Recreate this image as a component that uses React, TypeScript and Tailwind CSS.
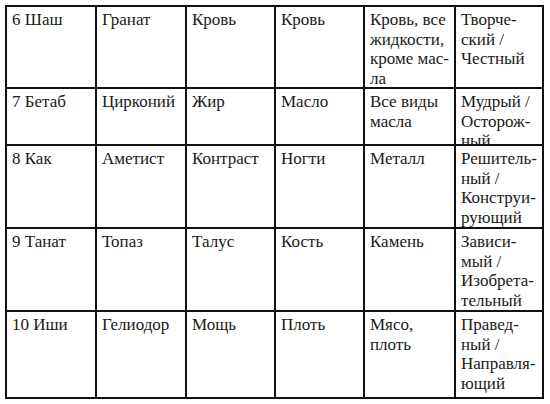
const rows: { h: string; cells: string[][] }[] = [
  {
    h: 'h-[82px]',
    cells: [
      ['6 Шаш'],
      ['Гранат'],
      ['Кровь'],
      ['Кровь'],
      ['Кровь, все', 'жидкости,', 'кроме мас-', 'ла'],
      ['Творче-', 'ский /', 'Честный'],
    ],
  },
  {
    h: 'h-[57px]',
    cells: [
      ['7 Бетаб'],
      ['Цирконий'],
      ['Жир'],
      ['Масло'],
      ['Все виды', 'масла'],
      ['Мудрый /', 'Осторож-', 'ный'],
    ],
  },
  {
    h: 'h-[83px]',
    cells: [
      ['8 Как'],
      ['Аметист'],
      ['Контраст'],
      ['Ногти'],
      ['Металл'],
      ['Решитель-', 'ный /', 'Конструи-', 'рующий'],
    ],
  },
  {
    h: 'h-[83px]',
    cells: [
      ['9 Танат'],
      ['Топаз'],
      ['Талус'],
      ['Кость'],
      ['Камень'],
      ['Зависи-', 'мый /', 'Изобрета-', 'тельный'],
    ],
  },
  {
    h: 'h-[87px]',
    cells: [
      ['10 Иши'],
      ['Гелиодор'],
      ['Мощь'],
      ['Плоть'],
      ['Мясо,', 'плоть'],
      ['Правед-', 'ный /', 'Направля-', 'ющий'],
    ],
  },
]

export default function App() {
  return (
    <div className="w-[550px] h-[404px] bg-white pt-[5px] pl-[5px] text-[#1a1a1a] font-['Liberation_Serif',serif]">
      <div className="grid grid-cols-[90px_90px_89px_89px_91px_88px] w-fit border-t-2 border-l-2 border-[#111]">
        {rows.map((row) =>
          row.cells.map((lines, c) => (
            <div
              key={row.cells[0][0] + c}
              className={`${row.h} border-r-2 border-b-2 border-[#111] pl-[5px] pt-[3px] text-[17px] leading-[19.6px] whitespace-nowrap`}
            >
              {lines.map((l, i) => (
                <div key={i}>{l}</div>
              ))}
            </div>
          ))
        )}
      </div>
    </div>
  )
}
